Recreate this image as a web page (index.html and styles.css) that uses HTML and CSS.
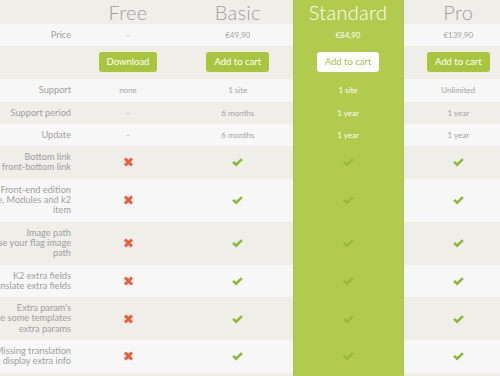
FILE: index.html
```html
<!DOCTYPE html>
<html lang="en">
<head>
    <meta charset="UTF-8">
    <title>Pricing</title>
    <link rel="stylesheet" href="styles.css">
</head>
<body>
    <table class="pricing">
        <colgroup>
            <col class="col-label">
            <col class="col-plan">
            <col class="col-plan">
            <col class="col-plan">
            <col class="col-plan">
        </colgroup>
        <tr class="head">
            <th></th>
            <th>Free</th>
            <th>Basic</th>
            <th class="std">Standard</th>
            <th>Pro</th>
        </tr>
        <tr class="light">
            <td class="label">Price</td>
            <td>-</td>
            <td>€49,90</td>
            <td class="std">€84,90</td>
            <td>€139,90</td>
        </tr>
        <tr class="beige buttons">
            <td class="label"></td>
            <td><a href="#" class="btn">Download</a></td>
            <td><a href="#" class="btn">Add to cart</a></td>
            <td class="std"><a href="#" class="btn btn-white">Add to cart</a></td>
            <td><a href="#" class="btn">Add to cart</a></td>
        </tr>
        <tr class="light">
            <td class="label">Support</td>
            <td>none</td>
            <td>1 site</td>
            <td class="std">1 site</td>
            <td>Unlimited</td>
        </tr>
        <tr class="beige">
            <td class="label">Support period</td>
            <td>-</td>
            <td>6 months</td>
            <td class="std">1 year</td>
            <td>1 year</td>
        </tr>
        <tr class="light">
            <td class="label">Update</td>
            <td>-</td>
            <td>6 months</td>
            <td class="std">1 year</td>
            <td>1 year</td>
        </tr>
        <tr class="beige">
            <td class="label">Bottom link<br>Hide front-bottom link</td>
            <td><svg class="icon" viewBox="0 0 10 10"><path class="no" d="M1.5 1.5 L8.5 8.5 M8.5 1.5 L1.5 8.5"/></svg></td>
            <td><svg class="icon" viewBox="0 0 12 10"><path class="yes" d="M1.2 4.8 L4.5 8 L10.8 1.8"/></svg></td>
            <td class="std"><svg class="icon" viewBox="0 0 12 10"><path class="yes" d="M1.2 4.8 L4.5 8 L10.8 1.8"/></svg></td>
            <td><svg class="icon" viewBox="0 0 12 10"><path class="yes" d="M1.2 4.8 L4.5 8 L10.8 1.8"/></svg></td>
        </tr>
        <tr class="light">
            <td class="label">Front-end edition<br>Article, Modules and k2<br>item</td>
            <td><svg class="icon" viewBox="0 0 10 10"><path class="no" d="M1.5 1.5 L8.5 8.5 M8.5 1.5 L1.5 8.5"/></svg></td>
            <td><svg class="icon" viewBox="0 0 12 10"><path class="yes" d="M1.2 4.8 L4.5 8 L10.8 1.8"/></svg></td>
            <td class="std"><svg class="icon" viewBox="0 0 12 10"><path class="yes" d="M1.2 4.8 L4.5 8 L10.8 1.8"/></svg></td>
            <td><svg class="icon" viewBox="0 0 12 10"><path class="yes" d="M1.2 4.8 L4.5 8 L10.8 1.8"/></svg></td>
        </tr>
        <tr class="beige">
            <td class="label">Image path<br>Choose your flag image<br>path</td>
            <td><svg class="icon" viewBox="0 0 10 10"><path class="no" d="M1.5 1.5 L8.5 8.5 M8.5 1.5 L1.5 8.5"/></svg></td>
            <td><svg class="icon" viewBox="0 0 12 10"><path class="yes" d="M1.2 4.8 L4.5 8 L10.8 1.8"/></svg></td>
            <td class="std"><svg class="icon" viewBox="0 0 12 10"><path class="yes" d="M1.2 4.8 L4.5 8 L10.8 1.8"/></svg></td>
            <td><svg class="icon" viewBox="0 0 12 10"><path class="yes" d="M1.2 4.8 L4.5 8 L10.8 1.8"/></svg></td>
        </tr>
        <tr class="light">
            <td class="label">K2 extra fields<br>Translate extra fields</td>
            <td><svg class="icon" viewBox="0 0 10 10"><path class="no" d="M1.5 1.5 L8.5 8.5 M8.5 1.5 L1.5 8.5"/></svg></td>
            <td><svg class="icon" viewBox="0 0 12 10"><path class="yes" d="M1.2 4.8 L4.5 8 L10.8 1.8"/></svg></td>
            <td class="std"><svg class="icon" viewBox="0 0 12 10"><path class="yes" d="M1.2 4.8 L4.5 8 L10.8 1.8"/></svg></td>
            <td><svg class="icon" viewBox="0 0 12 10"><path class="yes" d="M1.2 4.8 L4.5 8 L10.8 1.8"/></svg></td>
        </tr>
        <tr class="beige">
            <td class="label">Extra param's<br>Translate some templates<br>extra params</td>
            <td><svg class="icon" viewBox="0 0 10 10"><path class="no" d="M1.5 1.5 L8.5 8.5 M8.5 1.5 L1.5 8.5"/></svg></td>
            <td><svg class="icon" viewBox="0 0 12 10"><path class="yes" d="M1.2 4.8 L4.5 8 L10.8 1.8"/></svg></td>
            <td class="std"><svg class="icon" viewBox="0 0 12 10"><path class="yes" d="M1.2 4.8 L4.5 8 L10.8 1.8"/></svg></td>
            <td><svg class="icon" viewBox="0 0 12 10"><path class="yes" d="M1.2 4.8 L4.5 8 L10.8 1.8"/></svg></td>
        </tr>
        <tr class="light">
            <td class="label">Missing translation<br>Can display extra info</td>
            <td><svg class="icon" viewBox="0 0 10 10"><path class="no" d="M1.5 1.5 L8.5 8.5 M8.5 1.5 L1.5 8.5"/></svg></td>
            <td><svg class="icon" viewBox="0 0 12 10"><path class="yes" d="M1.2 4.8 L4.5 8 L10.8 1.8"/></svg></td>
            <td class="std"><svg class="icon" viewBox="0 0 12 10"><path class="yes" d="M1.2 4.8 L4.5 8 L10.8 1.8"/></svg></td>
            <td><svg class="icon" viewBox="0 0 12 10"><path class="yes" d="M1.2 4.8 L4.5 8 L10.8 1.8"/></svg></td>
        </tr>
        <tr class="beige">
            <td class="label"></td>
            <td></td>
            <td></td>
            <td class="std"></td>
            <td></td>
        </tr>
    </table>
</body>
</html>
```

FILE: styles.css
```css
/* Reset */
* {
    margin: 0;
    padding: 0;
    box-sizing: border-box;
}

body {
    font-family: 'Lato', 'Liberation Sans', sans-serif;
    background: #efeee9;
    color: #9a9a9a;
    overflow: hidden;
}

/* Pricing table */
.pricing {
    border-collapse: collapse;
    table-layout: fixed;
    width: 560px;
    margin-left: -47px;
}

.col-label {
    width: 120px;
}

.col-plan {
    width: 110px;
}

.pricing th {
    height: 24px;
    font-size: 20px;
    font-weight: 300;
    line-height: 24px;
    letter-spacing: 0.3px;
    color: #9d9d9d;
    background: #efeee9;
    text-align: center;
}

.pricing td {
    padding: 6px 0;
    font-size: 8px;
    line-height: 10.3px;
    text-align: center;
    vertical-align: middle;
    color: #a3a3a3;
}

.pricing td.label {
    padding-right: 2px;
    text-align: right;
    white-space: nowrap;
    font-size: 9.2px;
    color: #a0a0a0;
}

.light td {
    background: #f7f7f7;
}

.beige td {
    background: #efeee9;
}

.buttons td {
    padding: 6px 0 7px;
}

/* Highlighted plan */
.pricing .std,
.pricing tr td.std {
    background: #b2ca4d;
    color: #fff;
    border-left: 1px solid #a8c244;
    border-right: 1px solid #a8c244;
}

/* Buttons */
.btn {
    display: inline-block;
    padding: 5px 8px;
    font-size: 9.5px;
    line-height: 10px;
    color: #fff;
    background: #a9c53f;
    border-radius: 3px;
    text-decoration: none;
}

.btn-white {
    background: #fff;
    color: #a4c13c;
}

/* Check / cross icons */
.icon {
    display: block;
    margin: 0 auto;
    width: 11px;
    height: 10px;
}

.icon .yes {
    fill: none;
    stroke: #8db832;
    stroke-width: 2.8;
}

.icon .no {
    fill: none;
    stroke: #f5573b;
    stroke-width: 3;
}

.std .icon .yes {
    stroke: #9ab93c;
}
```
